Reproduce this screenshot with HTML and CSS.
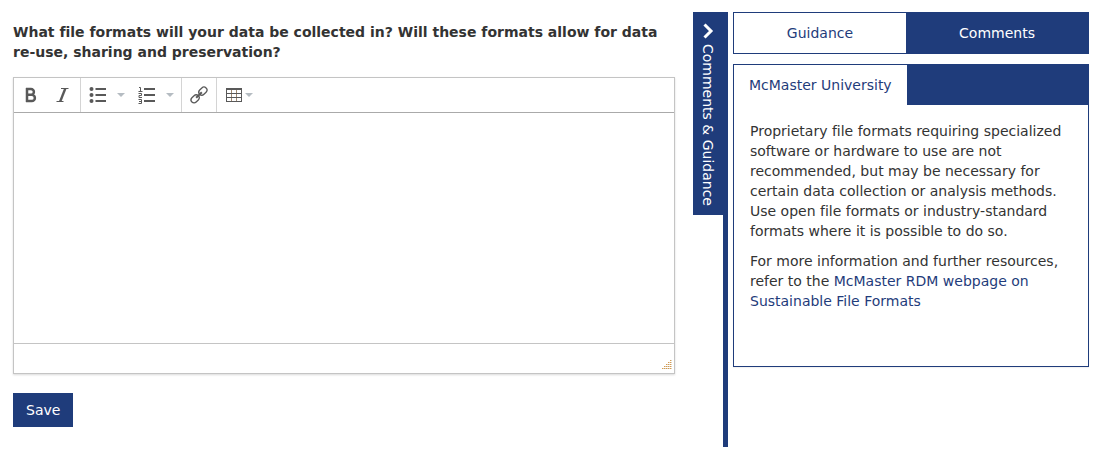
FILE: index.html
```html
<!DOCTYPE html>
<html lang="en">
<head>
<meta charset="utf-8">
<title>Data collection</title>
<link rel="stylesheet" href="styles.css">
</head>
<body>
<div class="page">
  <form class="question">
    <label class="question-text" for="answer">What file formats will your data be collected in? Will these formats allow for data re-use, sharing and preservation?</label>
    <div class="editor">
      <div class="toolbar" role="toolbar" aria-label="Formatting">
        <div class="group">
          <button type="button" class="tool" aria-label="Bold"><svg width="16" height="16" viewBox="0 0 16 16"><path d="M4 1v14M3 2h5a2.900 2.900 0 0 1 0 5.800H4M4 7.800h4.800a3.100 3.100 0 0 1 0 6.200H3" class="line bold"/></svg></button>
          <button type="button" class="tool" aria-label="Italic"><svg width="16" height="16" viewBox="0 0 16 16"><path d="M5 1.500h7.500M.5 14.500h7" class="line thin"/><path d="M8 1.500h2.600L5.500 14.500H2.900z" class="solid"/></svg></button>
        </div>
        <div class="group">
          <button type="button" class="tool split" aria-label="Bullet list"><svg width="18" height="18" viewBox="0 0 18 18"><circle cx="2.500" cy="3" r="2" class="solid"/><circle cx="2.500" cy="9" r="2" class="solid"/><circle cx="2.500" cy="15" r="2" class="solid"/><path d="M6.500 3H17M6.500 9H17M6.500 15H17" class="line medium"/></svg><span class="caret"></span></button>
          <button type="button" class="tool split numbered" aria-label="Numbered list"><svg width="18" height="18" viewBox="0 0 18 18"><path d="M1 1.500h1.500V5M.5 5.500h4M.5 7.500h3v2H1v2h3M.5 13.500h3v4H.5M1 15.500h2" class="line thin"/><path d="M6 3h11M6 9h11M6 15h11" class="line medium"/></svg><span class="caret"></span></button>
        </div>
        <div class="group">
          <button type="button" class="tool link-tool" aria-label="Insert link"><svg width="18" height="18" viewBox="0 0 18 18"><g transform="rotate(-45 9 9)" class="line link"><rect x="-1" y="6" width="9" height="6" rx="3"/><rect x="10" y="6" width="9" height="6" rx="3"/><path d="M5 9h8" class="link-bar"/></g></svg></button>
        </div>
        <div class="group">
          <button type="button" class="tool table-tool" aria-label="Table"><svg width="18" height="16" viewBox="0 0 18 16"><path d="M6.500 2v13M11.500 2v13" class="line thin rule"/><path d="M1 2h16" class="line medium"/><path d="M1 6.500h16M1 10.500h16M1 14.500h16M1.500 1v14M16.500 1v14" class="line thin"/></svg><span class="caret"></span></button>
        </div>
      </div>
      <textarea id="answer" class="editing-area"></textarea>
      <div class="status"><svg width="10" height="10" viewBox="0 0 10 10" aria-hidden="true"><path d="M8 .5h2M6 2.500h4M4 4.500h6M2 6.500h8M0 8.500h10" class="grip-light"/><path d="M8 .5h2M6 2.500h4M4 4.500h6M2 6.500h8M0 8.500h10" class="grip"/></svg></div>
    </div>
    <button type="button" class="save">Save</button>
  </form>
  <div class="drawer">
    <button type="button" class="drawer-toggle"><svg width="12" height="16" viewBox="0 0 12 16" aria-hidden="true"><path d="M2.500 1.500L9 8l-6.500 6.500" class="chevron"/></svg><span class="drawer-label">Comments &amp; Guidance</span></button>
  </div>
  <aside class="panel">
    <div class="tabs" role="tablist">
      <button type="button" class="tab selected" role="tab" aria-selected="true">Guidance</button>
      <button type="button" class="tab" role="tab" aria-selected="false">Comments</button>
    </div>
    <section class="guidance">
      <div class="sources" role="tablist">
        <button type="button" class="source" role="tab" aria-selected="true">McMaster University</button>
      </div>
      <div class="guidance-text">
        <p>Proprietary file formats requiring specialized software or hardware to use are not recommended, but may be necessary for certain data collection or analysis methods. Use open file formats or industry-standard formats where it is possible to do so.</p>
        <p>For more information and further resources, refer to the <a href="#">McMaster RDM webpage on Sustainable File Formats</a></p>
      </div>
    </section>
  </aside>
</div>
</body>
</html>
```
FILE: styles.css
```css
* { box-sizing: border-box; }

body {
  margin: 0;
  background: #fff;
  color: #333;
  font: 14px/20px Verdana, "DejaVu Sans", sans-serif;
  font-variant-ligatures: none;
}

button {
  border: 0;
  padding: 0;
  background: none;
  color: inherit;
  font: inherit;
}

.page {
  display: grid;
  grid-template-columns: minmax(0, 662fr) 48px minmax(0, 356fr);
  column-gap: 5px;
  padding: 12px 14px 24px 13px;
}

.question { padding-top: 10px; }

.question-text {
  display: block;
  font-weight: bold;
}

.editor {
  margin: 15px 0 19px;
  border: 1px solid #c4c4c4;
  box-shadow: 0 1px 2px rgba(0, 0, 0, 0.15);
}

.toolbar {
  display: flex;
  height: 35px;
  border-bottom: 1px solid #aaa;
}

.group {
  display: flex;
  align-items: center;
  border-right: 1px solid #d4d4d4;
}

.group:last-child { border-right: 0; }

.tool {
  display: flex;
  align-items: center;
  justify-content: center;
  width: 33px;
  height: 34px;
}

.tool.split {
  justify-content: space-between;
  width: 50px;
  padding: 0 6px 0 8px;
}

.tool.numbered { padding: 0 7px; }
.tool.link-tool { width: 34px; }

.tool.table-tool {
  gap: 2px;
  width: 43px;
}

.tool svg { flex: none; }

.caret {
  border: 4px solid transparent;
  border-top-color: #b5bcc2;
  border-bottom: 0;
}

.line { fill: none; stroke: #595959; }
.solid { fill: #595959; }
.bold { stroke-width: 2.500; }
.medium { stroke-width: 2; }
.thin { stroke-width: 1; }
.rule { stroke: #a08a72; }
.link { stroke-width: 1.300; }
.link-bar { stroke-width: 2; }

.editing-area {
  display: block;
  width: 100%;
  height: 230px;
  border: 0;
  padding: 8px;
  outline: 0;
  resize: none;
  font: inherit;
}

.status {
  display: flex;
  align-items: flex-end;
  justify-content: flex-end;
  height: 30px;
  padding: 0 2px 3px;
  border-top: 1px solid #c4c4c4;
}

.grip-light { stroke: #ddd3bd; }
.grip { stroke: #d79a50; stroke-dasharray: 1 1; }

.save {
  padding: 7px 13px;
  background: #1f3c7b;
  color: #fff;
}

.drawer {
  display: flex;
  align-items: flex-start;
  justify-content: flex-end;
  border-right: 5px solid #1f3c7b;
}

.drawer-toggle {
  display: flex;
  flex-direction: column;
  align-items: center;
  gap: 5px;
  width: 30px;
  height: 203px;
  padding-top: 11px;
  background: #1f3c7b;
  color: #fff;
}

.drawer-label { writing-mode: vertical-rl; }
.chevron { fill: none; stroke: #fff; stroke-width: 3; }

.panel {
  display: flex;
  flex-direction: column;
  gap: 10px;
  min-height: 435px;
}

.tabs, .guidance { border: 1px solid #1f3c7b; }

.tabs {
  display: flex;
  height: 42px;
  background: #1f3c7b;
}

.tab {
  flex: 182;
  color: #fff;
}

.tab.selected {
  flex: 172;
  background: #fff;
  color: #1f3c7b;
}

.guidance {
  min-height: 303px;
  box-shadow: 0 1px 1px rgba(0, 0, 0, 0.05);
}

.sources {
  display: flex;
  background: #1f3c7b;
}

.source {
  padding: 10px 15px;
  background: #fff;
  color: #1f3c7b;
  white-space: nowrap;
}

.guidance-text { padding: 16px; }
.guidance-text p { margin: 0 0 10px; }
.guidance-text a { color: #1f3c7b; text-decoration: none; }
```
